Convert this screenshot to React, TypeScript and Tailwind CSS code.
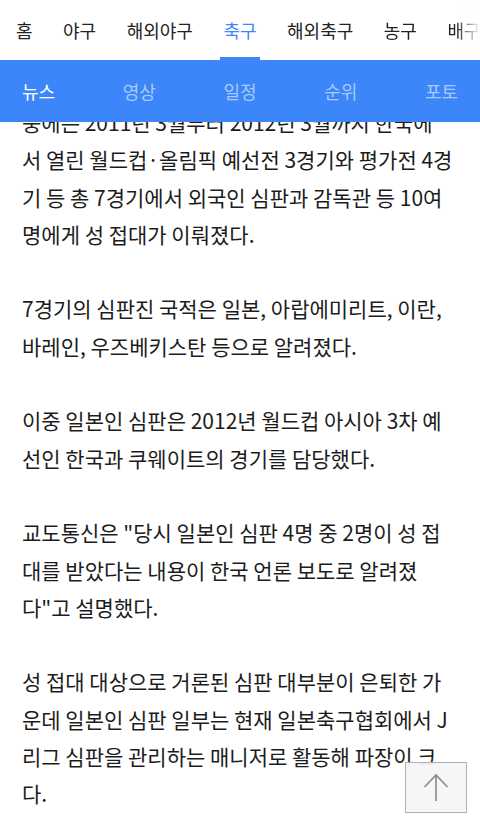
const tabs = ['홈', '야구', '해외야구', '축구', '해외축구', '농구', '배구'];
const subTabs = ['뉴스', '영상', '일정', '순위', '포토'];

const paragraphs: string[][] = [
  [
    '중에는 2011년 3월부터 2012년 3월까지 한국에',
    '서 열린 월드컵·올림픽 예선전 3경기와 평가전 4경',
    '기 등 총 7경기에서 외국인 심판과 감독관 등 10여',
    '명에게 성 접대가 이뤄졌다.',
  ],
  ['7경기의 심판진 국적은 일본, 아랍에미리트, 이란,', '바레인, 우즈베키스탄 등으로 알려졌다.'],
  ['이중 일본인 심판은 2012년 월드컵 아시아 3차 예', '선인 한국과 쿠웨이트의 경기를 담당했다.'],
  [
    '교도통신은 "당시 일본인 심판 4명 중 2명이 성 접',
    '대를 받았다는 내용이 한국 언론 보도로 알려졌',
    '다"고 설명했다.',
  ],
  [
    '성 접대 대상으로 거론된 심판 대부분이 은퇴한 가',
    '운데 일본인 심판 일부는 현재 일본축구협회에서 J',
    '리그 심판을 관리하는 매니저로 활동해 파장이 크',
    '다.',
  ],
];

export default function App() {
  return (
    <div
      className="relative h-[833px] w-[480px] overflow-hidden bg-white"
      style={{ fontFamily: '"Noto Sans CJK KR", "Noto Sans", sans-serif' }}
    >
      <div className="sticky top-0 z-10">
        <nav className="relative flex h-[60px] items-center gap-[30.5px] bg-white pl-4 text-[18px] text-[#222]">
          {tabs.map((t) => (
            <div key={t} className="relative flex h-full shrink-0 items-center">
              <span className={t === '축구' ? 'text-[#3d86f9]' : ''}>{t}</span>
              {t === '축구' && (
                <span className="absolute bottom-0 left-1/2 h-[3px] w-10 -translate-x-1/2 bg-[#3d86f9]" />
              )}
            </div>
          ))}
          <div className="absolute right-0 top-0 h-full w-6 bg-gradient-to-r from-transparent to-white" />
        </nav>
        <div className="flex h-[62px] items-center justify-between bg-[#3d86f9] px-[22px] text-[18px]">
          {subTabs.map((t, i) => (
            <span key={t} className={i === 0 ? 'text-white' : 'text-[#a8cafc]'}>
              {t}
            </span>
          ))}
        </div>
      </div>

      <article className="-mt-[18px] px-[22px] text-[21px] leading-[37.3px] text-[#1c1c1c]">
        {paragraphs.map((p, i) => (
          <div key={i} className={i > 0 ? 'mt-[37.3px]' : ''}>
            {p.map((line) => (
              <div key={line} className="whitespace-nowrap">
                {line}
              </div>
            ))}
          </div>
        ))}
      </article>

      <button className="absolute left-[405px] top-[762px] flex h-[51px] w-[62px] items-center justify-center border border-[#b0b0b0] bg-[#f5f5f8]/95">
        <svg width="26" height="30" viewBox="0 0 26 30" fill="none" stroke="#8a8a8a" strokeWidth="1.6">
          <path d="M13 2 V28" />
          <path d="M1.5 14 L13 2 L24.5 14" />
        </svg>
      </button>
    </div>
  );
}
